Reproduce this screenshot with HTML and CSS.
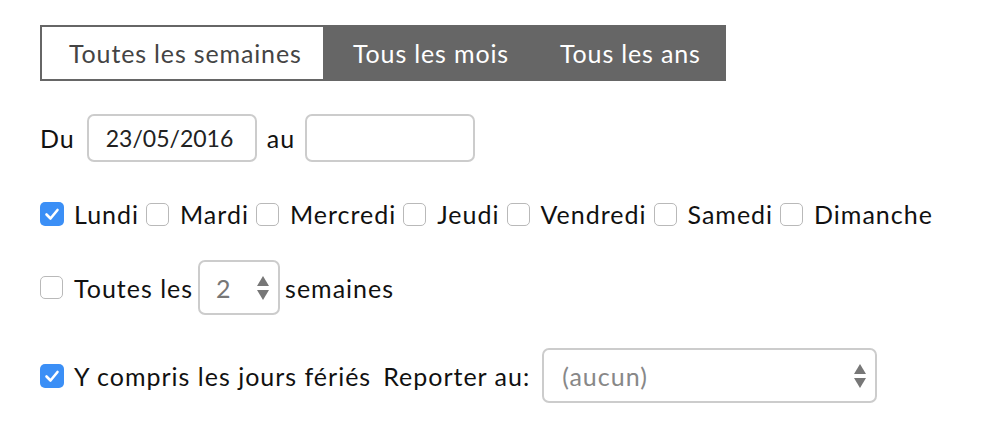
FILE: index.html
```html
<!DOCTYPE html>
<html lang="fr">
<head>
<meta charset="utf-8">
<title>Récurrence</title>
<link rel="stylesheet" href="styles.css">
</head>
<body>
<div class="page">
  <div class="tabs">
    <div class="tab active">Toutes les semaines</div>
    <div class="tab t2">Tous les mois</div>
    <div class="tab t3">Tous les ans</div>
  </div>

  <div class="row dates">
    <span class="lbl">Du</span>
    <div class="field date">23/05/2016</div>
    <span class="lbl">au</span>
    <div class="field date empty"></div>
  </div>

  <div class="row days">
    <span class="cb checked"><svg viewBox="0 0 24 24" width="24" height="24"><path d="M6.5 12.5 L10.5 16.5 L17.5 8" fill="none" stroke="#fff" stroke-width="2.6" stroke-linecap="round" stroke-linejoin="round"/></svg></span><span class="day">Lundi</span>
    <span class="cb"></span><span class="day">Mardi</span>
    <span class="cb"></span><span class="day">Mercredi</span>
    <span class="cb"></span><span class="day">Jeudi</span>
    <span class="cb"></span><span class="day">Vendredi</span>
    <span class="cb"></span><span class="day">Samedi</span>
    <span class="cb"></span><span class="day">Dimanche</span>
  </div>

  <div class="row every">
    <span class="cb"></span><span class="day">Toutes les</span>
    <div class="field number"><span class="val">2</span><svg class="spin" viewBox="0 0 14 28" width="14" height="28"><path d="M7 2 L13 12 L1 12 Z" fill="#777"/><path d="M1 16 L13 16 L7 26 Z" fill="#777"/></svg></div>
    <span class="after">semaines</span>
  </div>

  <div class="row holidays">
    <span class="cb checked"><svg viewBox="0 0 24 24" width="24" height="24"><path d="M6.5 12.5 L10.5 16.5 L17.5 8" fill="none" stroke="#fff" stroke-width="2.6" stroke-linecap="round" stroke-linejoin="round"/></svg></span><span class="day">Y compris les jours fériés</span>
    <span class="report">Reporter au:</span>
    <div class="field select"><span class="val">(aucun)</span><svg class="spin" viewBox="0 0 14 28" width="14" height="28"><path d="M7 2 L13 12 L1 12 Z" fill="#777"/><path d="M1 16 L13 16 L7 26 Z" fill="#777"/></svg></div>
  </div>
</div>
</body>
</html>
```
FILE: styles.css
```css
html, body {
  margin: 0;
  padding: 0;
  background: #fff;
}
body {
  font-family: Lato, "Open Sans", "Liberation Sans", sans-serif;
  font-size: 25px;
  letter-spacing: 1px;
  color: #111;
}
.page {
  padding: 25px 40px;
  display: flex;
  flex-direction: column;
  align-items: flex-start;
}
.tabs {
  display: flex;
  height: 56px;
  background: #666;
  width: 686px;
  letter-spacing: 0.85px;
}
.tab {
  display: flex;
  align-items: center;
  color: #fff;
  box-sizing: border-box;
  white-space: nowrap;
  padding-left: 28px;
}
.tab.active {
  background: #fff;
  color: #444;
  border: 2px solid #666;
  width: 285px;
  padding-left: 27px;
}
.t2 { width: 207px; }
.t3 { width: 194px; }
.row {
  display: flex;
  align-items: center;
  white-space: nowrap;
}
.dates {
  margin-top: 33px;
  height: 48px;
}
.lbl {
  margin-right: 12px;
}
.lbl + .field + .lbl {
  margin-left: -1px;
  margin-right: 10px;
}
.field {
  box-sizing: border-box;
  border: 2px solid #ccc;
  border-radius: 7px;
  background: #fff;
  display: flex;
  align-items: center;
}
.date {
  width: 170px;
  height: 48px;
  padding-left: 17px;
  margin-right: 11px;
  color: #222;
  font-size: 23px;
  letter-spacing: 0;
}
.days {
  margin-top: 40px;
  height: 24px;
}
.cb {
  box-sizing: border-box;
  width: 23px;
  height: 23px;
  border: 1px solid #b9b9b9;
  border-radius: 5px;
  background: #fff;
  flex: none;
  margin-left: 7px;
  margin-right: 11px;
  display: flex;
  align-items: center;
  justify-content: center;
}
.cb:first-child {
  margin-left: 0;
}
.cb.checked {
  width: 24px;
  height: 24px;
  border: none;
  background: #3b8ff6;
  margin-right: 10px;
}
.cb svg {
  display: block;
}
.every {
  margin-top: 34px;
  height: 55px;
}
.number {
  width: 82px;
  height: 55px;
  margin-left: 5px;
  margin-right: 5px;
  padding-left: 16px;
  padding-right: 8px;
  justify-content: space-between;
}
.val {
  color: #777;
}
.holidays {
  margin-top: 33px;
  height: 55px;
}
.report {
  margin-left: 12px;
  margin-right: 12px;
}
.select {
  width: 335px;
  height: 55px;
  padding-left: 18px;
  padding-right: 8px;
  justify-content: space-between;
}
.select .val {
  color: #888;
}
```
